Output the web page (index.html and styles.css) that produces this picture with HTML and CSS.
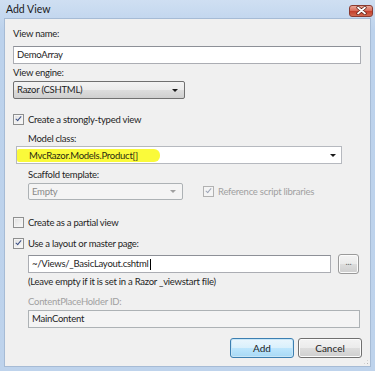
FILE: index.html
```html
<!DOCTYPE html>
<html lang="en">
<head>
  <meta charset="UTF-8">
  <title>Add View</title>
  <link rel="stylesheet" href="styles.css">
</head>
<body>
  <div class="window">
    <div class="titlebar">
      <span class="title">Add View</span>
      <span class="close-btn">
        <svg width="11" height="9" viewBox="0 0 11 9">
          <path d="M2 1.5 L9 7.5 M9 1.5 L2 7.5" stroke="#5a1c14" stroke-width="3.2" stroke-linecap="round"/>
          <path d="M2 1.5 L9 7.5 M9 1.5 L2 7.5" stroke="#fff" stroke-width="1.8" stroke-linecap="round"/>
        </svg>
      </span>
    </div>
    <div class="client">
      <div class="label l-viewname">View name:</div>
      <div class="textbox tb-name">DemoArray</div>

      <div class="label l-engine">View engine:</div>
      <div class="combo combo-engine">
        <span>Razor (CSHTML)</span>
        <span class="arrow"></span>
      </div>

      <div class="check-row cr-typed">
        <span class="check checked"></span>
        <span>Create a strongly-typed view</span>
      </div>

      <div class="indent">
        <div class="label l-model">Model class:</div>
        <div class="textbox combo-model">
          <span class="highlight">MvcRazor.Models.Product[]</span>
          <span class="arrow"></span>
        </div>

        <div class="label l-scaffold">Scaffold template:</div>
        <div class="scaffold-row">
          <div class="combo combo-disabled">
            <span>Empty</span>
            <span class="arrow"></span>
          </div>
          <div class="check-row disabled">
            <span class="check checked"></span>
            <span>Reference script libraries</span>
          </div>
        </div>
      </div>

      <div class="check-row cr-partial">
        <span class="check"></span>
        <span>Create as a partial view</span>
      </div>

      <div class="check-row cr-layout">
        <span class="check checked"></span>
        <span>Use a layout or master page:</span>
      </div>

      <div class="indent">
        <div class="layout-row">
          <div class="textbox tb-layout">~/Views/_BasicLayout.cshtml<span class="caret"></span></div>
          <div class="btn btn-browse">...</div>
        </div>
        <div class="label l-hint">(Leave empty if it is set in a Razor _viewstart file)</div>
        <div class="label l-placeholder disabled">ContentPlaceHolder ID:</div>
        <div class="textbox tb-disabled">MainContent</div>
      </div>

      <div class="actions">
        <div class="btn btn-default">Add</div>
        <div class="btn">Cancel</div>
      </div>

      <div class="grip"></div>
    </div>
  </div>
</body>
</html>
```

FILE: styles.css
```css
body {
  margin: 0;
  background: #fff;
  font-family: Lato, "Noto Sans", sans-serif;
  font-size: 9.5px;
  letter-spacing: -0.25px;
  color: #1e1e1e;
}
.window {
  width: 375px;
  height: 371px;
  box-sizing: border-box;
  padding: 0 4px 4px 4px;
  background: linear-gradient(#cfdff2, #bcd2ec 30px, #bed3ec);
  display: flex;
  flex-direction: column;
}
.titlebar {
  height: 18px;
  display: flex;
  align-items: center;
  justify-content: space-between;
}
.title {
  padding-left: 2px;
  font-size: 10.5px;
  letter-spacing: 0;
  color: #1a1a1a;
}
.close-btn {
  width: 22px;
  height: 10px;
  margin-top: 3px;
  margin-right: -2px;
  border: 1px solid #8a3a30;
  border-radius: 3px;
  background: linear-gradient(#e9a898, #d9705e 45%, #c4402e 55%, #d26a50);
  display: flex;
  align-items: center;
  justify-content: center;
}
.client {
  position: relative;
  flex: 1;
  background: #f0f0f0;
  border: 1px solid #a6bbd5;
  padding: 0 9px 0 8px;
}
.label {
  height: 15px;
  line-height: 15px;
}
.disabled {
  color: #a0a0a0;
}
.l-viewname { margin-top: 7px; }
.textbox {
  line-height: 16px;
  box-sizing: border-box;
  height: 18px;
  border: 1px solid #abadb3;
  border-top-color: #8d9097;
  background: #fff;
  padding: 0 3px;
}
.tb-name { margin-top: 5px; }
.l-engine { margin-top: 1px; }
.combo {
  position: relative;
  box-sizing: border-box;
  height: 18px;
  line-height: 16px;
  padding: 0 3px;
  border: 1px solid #707070;
  border-radius: 2px;
  background: linear-gradient(#f3f3f3, #ebebeb 50%, #dddddd 50%, #cfcfcf);
  display: flex;
  justify-content: space-between;
  align-items: center;
}
.combo-engine {
  width: 172px;
  margin-top: 1px;
}
.arrow {
  width: 0;
  height: 0;
  border-left: 3px solid transparent;
  border-right: 3px solid transparent;
  border-top: 3px solid #1a1a1a;
  margin-right: 3px;
}
.check-row {
  display: flex;
  align-items: center;
  gap: 4px;
  height: 14px;
}
.check {
  width: 9px;
  height: 9px;
  border: 1px solid #8e8f8f;
  background: linear-gradient(135deg, #e0e0e0, #fafafa);
  box-shadow: inset 0 0 0 1px #f4f4f4;
  display: inline-block;
  position: relative;
}
.check.checked::after {
  content: "";
  position: absolute;
  left: 3px;
  top: 0px;
  width: 2px;
  height: 5px;
  border: solid #3a4f86;
  border-width: 0 1.5px 1.5px 0;
  transform: rotate(40deg);
}
.cr-typed { margin-top: 13px; }
.indent {
  padding-left: 15px;
}
.cr-typed + .indent {
  padding-left: 3px;
}
.cr-typed + .indent .label,
.cr-typed + .indent .scaffold-row {
  padding-left: 12px;
}
.l-model { margin-top: 5px; }
.combo-model {
  width: 326px;
  margin-top: 0;
  display: flex;
  justify-content: space-between;
  align-items: center;
  padding: 0;
  border-color: #b6b9bf;
}
.highlight {
  background: #fafa3a;
  height: 13px;
  line-height: 13px;
  padding: 0 22px 0 12px;
  border-radius: 2px 6px 6px 2px;
  color: #2a2a10;
}
.combo-model .arrow {
  margin-right: 5px;
}
.l-scaffold { margin-top: 3px; }
.scaffold-row {
  display: flex;
  align-items: center;
  gap: 20px;
  margin-top: 1px;
}
.combo-disabled {
  width: 155px;
  height: 17px;
  border-color: #adb2b5;
  background: #f4f4f4;
  color: #8a8a8a;
}
.combo-disabled .arrow {
  border-top-color: #a0a0a0;
}
.check-row.disabled .check {
  border-color: #b1b1b1;
  background: #f4f4f4;
}
.check-row.disabled .check::after {
  border-color: #9ea6b8;
}
.cr-partial { margin-top: 15px; }
.cr-layout { margin-top: 7px; }
.layout-row {
  display: flex;
  align-items: center;
  gap: 7px;
  margin-top: 4px;
}
.tb-layout {
  width: 303px;
}
.caret {
  display: inline-block;
  width: 1px;
  height: 11px;
  background: #000;
  vertical-align: middle;
  margin-left: 1px;
}
.btn {
  box-sizing: border-box;
  height: 20px;
  line-height: 18px;
  text-align: center;
  border: 1px solid #707070;
  border-radius: 3px;
  background: linear-gradient(#f3f3f3, #ebebeb 50%, #dddddd 50%, #cfcfcf);
  box-shadow: inset 0 0 0 1px #fcfcfc;
}
.btn-browse {
  width: 21px;
  color: #6a6a6a;
  line-height: 14px;
  border-color: #9a9a9a;
}
.l-hint { margin-top: 0; }
.l-placeholder { margin-top: 5px; }
.tb-disabled {
  width: 332px;
  margin-top: 1px;
  background: #f4f4f4;
  border-color: #adb2b5;
}
.actions {
  display: flex;
  justify-content: flex-end;
  gap: 4px;
  margin-top: 10px;
  margin-right: -1px;
}
.actions .btn {
  width: 64px;
  font-size: 10px;
  letter-spacing: 0;
}
.btn-default {
  border-color: #3c7fb1;
  box-shadow: inset 0 0 0 1px #c8e6f7;
  background: linear-gradient(#eaf6fd, #d9f0fc 50%, #bee6fd 50%, #a7d9f5);
}
.grip {
  position: absolute;
  right: 1px;
  bottom: 1px;
  width: 6px;
  height: 6px;
  background:
    radial-gradient(circle, #b5b5b5 0.8px, transparent 1px) 0 0 / 3px 3px;
  clip-path: polygon(100% 0, 100% 100%, 0 100%);
}
```
